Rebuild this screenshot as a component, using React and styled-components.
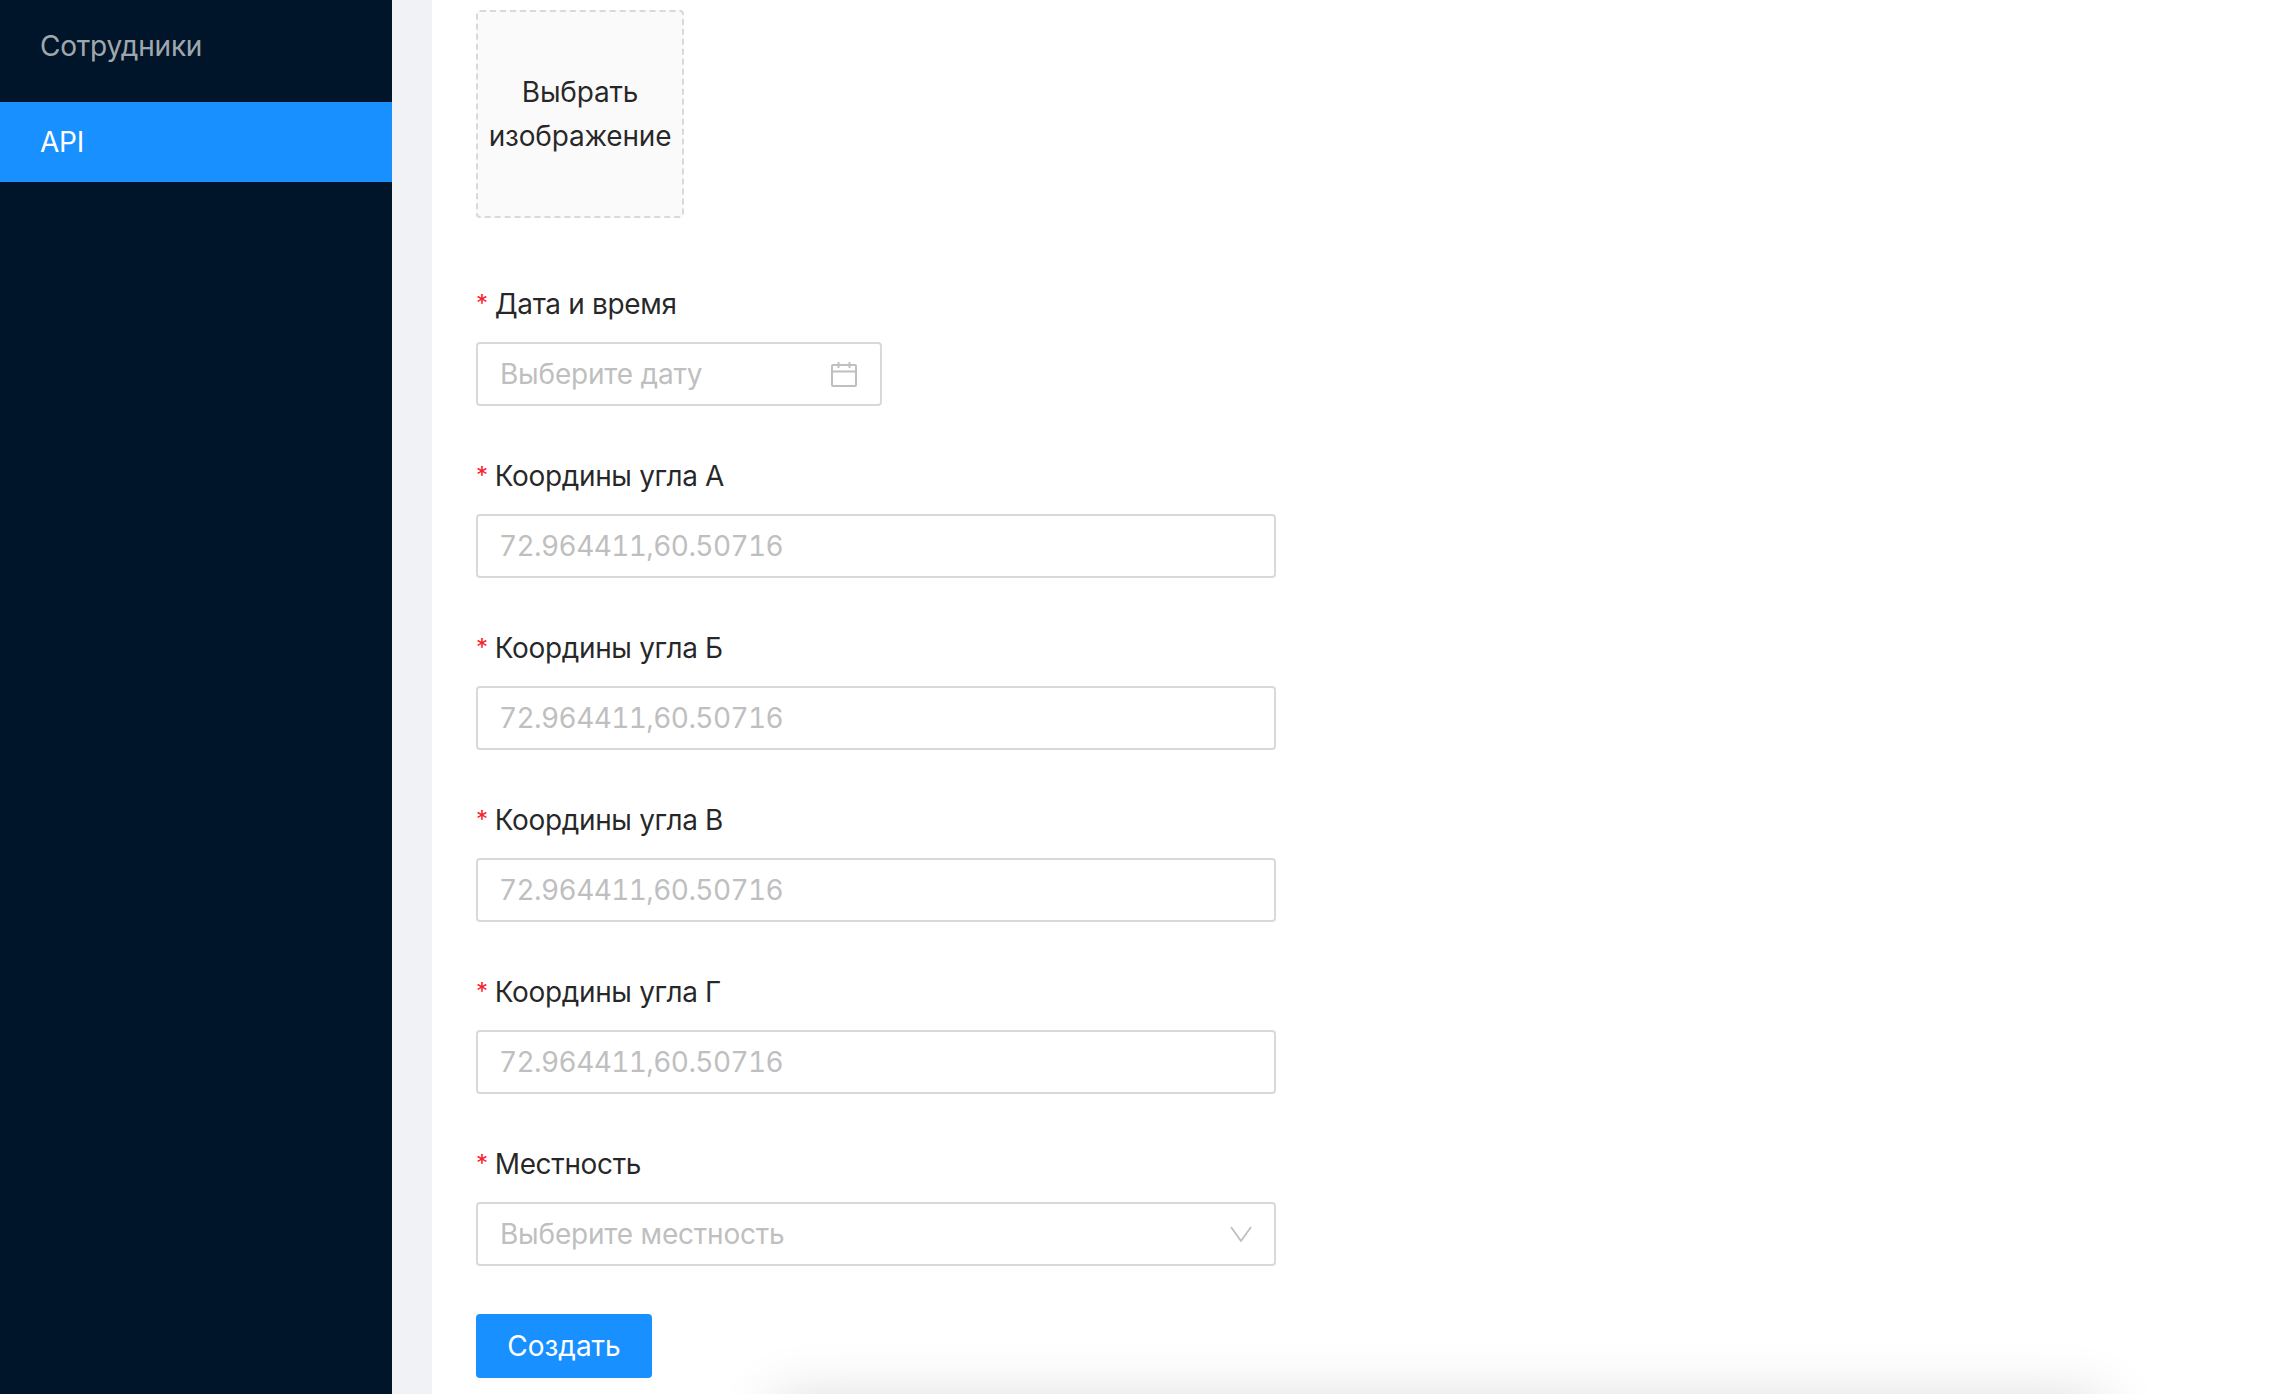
import React from 'react'
import styled, { createGlobalStyle } from 'styled-components'

const Global = createGlobalStyle`
  html, body { margin: 0; padding: 0; background: #fff; }
  body { font-family: Inter, "Noto Sans", "Liberation Sans", sans-serif; overflow: hidden; letter-spacing: -0.2px; }
`

const Layout = styled.div`
  display: flex;
  width: 2294px;
  height: 1394px;
  overflow: hidden;
  position: relative;
`

const Sidebar = styled.aside`
  width: 392px;
  flex: none;
  padding-top: 6px;
  box-sizing: border-box;
  background: #001529;
  display: flex;
  flex-direction: column;
  gap: 16px;
`

const MenuItem = styled.div`
  height: 80px;
  line-height: 80px;
  padding-left: 40px;
  font-size: 28px;
  color: ${p => (p.$active ? '#fff' : 'rgba(255,255,255,.65)')};
  background: ${p => (p.$active ? '#1890ff' : 'transparent')};
`

const Gutter = styled.div`
  width: 40px;
  flex: none;
  background: #f0f2f5;
`

const Content = styled.main`
  flex: 1;
  background: #fff;
  padding: 10px 0 0 44px;
`

const Upload = styled.div`
  width: 208px;
  height: 208px;
  box-sizing: border-box;
  border: 2px dashed #d9d9d9;
  border-radius: 4px;
  background: #fafafa;
  display: flex;
  align-items: center;
  justify-content: center;
  text-align: center;
  font-size: 28px;
  line-height: 44px;
  color: rgba(0,0,0,.85);
  margin-bottom: 44px;
`

const Field = styled.div`
  margin-bottom: 28px;
`

const Label = styled.label`
  display: block;
  height: 80px;
  line-height: 85px;
  font-size: 28px;
  letter-spacing: -0.35px;
  color: rgba(0,0,0,.85);
  &::before {
    content: '*';
    color: #f5222d;
    margin-right: 7px;
    font-size: 24px;
    line-height: 1;
    position: relative;
    top: -2px;
  }
`

const Control = styled.div`
  width: ${p => p.$width || 800}px;
  height: 64px;
  box-sizing: border-box;
  border: 2px solid #d9d9d9;
  border-radius: 4px;
  background: #fff;
  padding: 0 22px;
  display: flex;
  align-items: center;
  justify-content: space-between;
  font-size: 28px;
  color: #bfbfbf;
`

const Coordinates = styled.span`
  margin-left: -1px;
  font-variant-numeric: tabular-nums;
  letter-spacing: -0.6px;
`

const CreateButton = styled.button`
  display: block;
  width: 176px;
  height: 64px;
  margin-top: 48px;
  border: 0;
  border-radius: 4px;
  background: #1890ff;
  color: #fff;
  font: inherit;
  font-size: 28px;
  box-shadow: 0 4px 0 rgba(0,0,0,.015);
`

const BottomShadow = styled.div`
  position: absolute;
  left: 775px;
  right: 190px;
  top: 1400px;
  height: 60px;
  box-shadow: 0 0 60px rgba(0,0,0,.16);
`

const CalendarIcon = () => (
  <svg width="28" height="28" viewBox="0 0 28 28" fill="none" stroke="#bfbfbf" strokeWidth="2">
    <rect x="2" y="5" width="24" height="21" rx="1" />
    <path d="M2 11.5h24M8.5 2v6M19.5 2v6" />
  </svg>
)

const ChevronIcon = () => (
  <svg width="22" height="16" viewBox="0 0 22 16" fill="none" stroke="#bfbfbf" strokeWidth="1.8">
    <path d="M1 1l10 14L21 1" />
  </svg>
)

const corners = ['А', 'Б', 'В', 'Г']

export default function App() {
  return (
    <Layout>
      <Global />
      <Sidebar>
        <MenuItem>Сотрудники</MenuItem>
        <MenuItem $active>API</MenuItem>
      </Sidebar>
      <Gutter />
      <Content>
        <Upload>Выбрать<br />изображение</Upload>
        <Field>
          <Label>Дата и время</Label>
          <Control $width={406}>
            Выберите дату
            <CalendarIcon />
          </Control>
        </Field>
        {corners.map(c => (
          <Field key={c}>
            <Label>Координы угла {c}</Label>
            <Control><Coordinates>72.964411,60.50716</Coordinates></Control>
          </Field>
        ))}
        <Field>
          <Label>Местность</Label>
          <Control>
            Выберите местность
            <ChevronIcon />
          </Control>
        </Field>
        <CreateButton>Создать</CreateButton>
      </Content>
      <BottomShadow />
    </Layout>
  )
}
